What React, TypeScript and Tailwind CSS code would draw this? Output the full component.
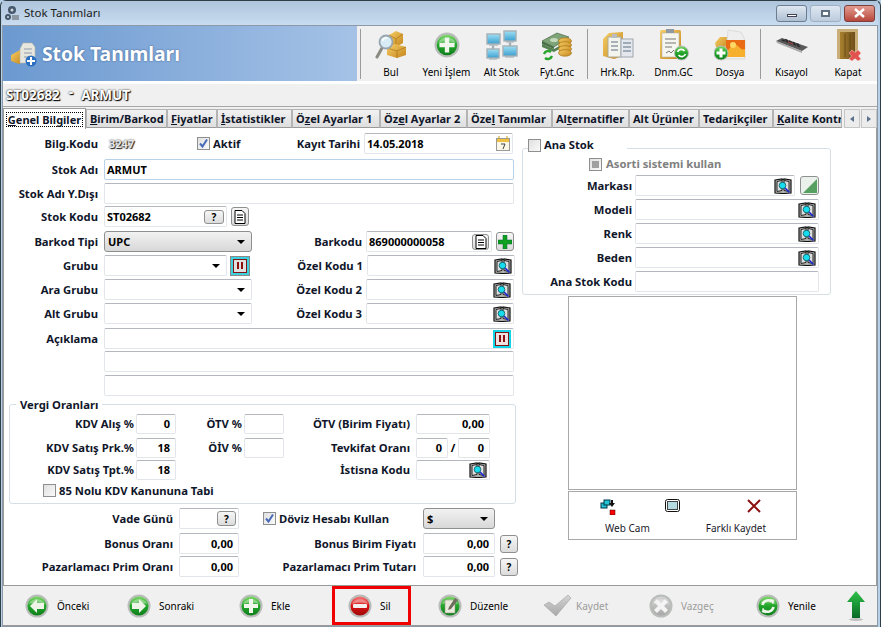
const font = "font-['Noto_Sans',sans-serif]";

function Defs() {
  return (
    <svg className="absolute h-0 w-0">
      <defs>
        <linearGradient id="green" x1="0" y1="0" x2="0" y2="1">
          <stop offset="0" stopColor="#7fd86a" />
          <stop offset="0.5" stopColor="#22a52a" />
          <stop offset="1" stopColor="#0e7d1c" />
        </linearGradient>
        <linearGradient id="red" x1="0" y1="0" x2="0" y2="1">
          <stop offset="0" stopColor="#f47a7a" />
          <stop offset="0.5" stopColor="#d81414" />
          <stop offset="1" stopColor="#a00808" />
        </linearGradient>
        <linearGradient id="grey" x1="0" y1="0" x2="0" y2="1">
          <stop offset="0" stopColor="#d4d4d4" />
          <stop offset="1" stopColor="#a8a8a8" />
        </linearGradient>
        <linearGradient id="gold" x1="0" y1="0" x2="1" y2="1">
          <stop offset="0" stopColor="#f6cf66" />
          <stop offset="1" stopColor="#c5851c" />
        </linearGradient>
        <linearGradient id="arrow" x1="0" y1="0" x2="0" y2="1">
          <stop offset="0" stopColor="#2fc24a" />
          <stop offset="1" stopColor="#066b25" />
        </linearGradient>
        <linearGradient id="door" x1="0" y1="0" x2="1" y2="0">
          <stop offset="0" stopColor="#a8802f" />
          <stop offset="1" stopColor="#6f4f1b" />
        </linearGradient>
        <linearGradient id="screen" x1="0" y1="0" x2="0" y2="1">
          <stop offset="0" stopColor="#9fe0f5" />
          <stop offset="1" stopColor="#3c9fd0" />
        </linearGradient>
      </defs>
    </svg>
  );
}

function Round({ tone, size = 24, children }: { tone: string; size?: number; children: React.ReactNode }) {
  return (
    <svg width={size} height={size} viewBox="0 0 24 24" className="shrink-0">
      <circle cx="12" cy="12" r="11.5" fill="#b9bdb9" />
      <circle cx="12" cy="12" r="9.5" fill={`url(#${tone})`} />
      <path d="M4 10a8.5 7 0 0 1 16 0a12 6 0 0 0-16 0z" fill="#fff" opacity=".35" />
      {children}
    </svg>
  );
}

const plus = <path d="M10 5h4v5h5v4h-5v5h-4v-5H5v-4h5z" fill="#f2f7ee" />;
const minus = <rect x="5" y="10" width="14" height="4" rx="1" fill="#f6f0f0" />;
const left = <path d="M5 12l7-7v4h7v6h-7v4z" fill="#eef5e8" />;
const right = <path d="M19 12l-7-7v4H5v6h7v4z" fill="#eef5e8" />;
const cross = <path d="M8 5l4 4 4-4 3 3-4 4 4 4-3 3-4-4-4 4-3-3 4-4-4-4z" fill="#f4f4f4" />;
const refresh = (
  <g fill="none" stroke="#f2f7ee" strokeWidth="2.6">
    <path d="M6.5 11a6 6 0 0 1 9.5-3.5" />
    <path d="M17.5 13a6 6 0 0 1-9.5 3.5" />
    <path d="M14 5l4 1-1 4z" fill="#f2f7ee" strokeWidth="0.5" />
    <path d="M10 19l-4-1 1-4z" fill="#f2f7ee" strokeWidth="0.5" />
  </g>
);
const edit = (
  <g>
    <path d="M7 6h8l2 2v11H7z" fill="#e9e9dc" stroke="#8a8a7a" strokeWidth=".5" />
    <path d="M17 4l3 2-7 9-3 1 1-3z" fill="#6e6e5e" />
  </g>
);

function BulIcon() {
  return (
    <svg width="32" height="32" viewBox="0 0 32 32">
      <path d="M14 6l7-4 7 3v9l-7 4-7-3z" fill="url(#gold)" />
      <path d="M14 6l7 4 7-5M21 10v8" stroke="#a87418" strokeWidth=".7" fill="none" />
      <path d="M12 19l8-4 11 3v8l-9 3-10-3z" fill="url(#gold)" />
      <path d="M12 19l10 3 9-4M22 22v7" stroke="#a87418" strokeWidth=".7" fill="none" />
      <path d="M7 19L2 28" stroke="#8a8a80" strokeWidth="3" strokeLinecap="round" />
      <circle cx="11" cy="13" r="6.5" fill="#d9ecf6" stroke="#98a4ae" strokeWidth="1.8" />
      <path d="M7.5 12a4 4 0 0 1 5-3" stroke="#fff" strokeWidth="1.4" fill="none" />
    </svg>
  );
}

function AltStokIcon() {
  const screens = [
    [1, 5, 13, 10],
    [18, 2, 12, 10],
    [1, 20, 12, 9],
    [17, 17, 14, 10],
  ];
  return (
    <svg width="32" height="32" viewBox="0 0 32 32">
      <path d="M7 15v5M24 12v5" stroke="#a5b0b6" strokeWidth="2.4" />
      <path d="M3 16h9M20 13h8M3 30h8M19 28h9" stroke="#b5bec4" strokeWidth="1.4" />
      {screens.map(([x, y, w, h], i) => (
        <rect key={i} x={x} y={y} width={w} height={h} fill="url(#screen)" stroke="#a5b0b6" strokeWidth="1.4" />
      ))}
    </svg>
  );
}

function FiyatIcon() {
  return (
    <svg width="32" height="32" viewBox="0 0 32 32">
      <path d="M1 12L16 4l12 4-15 10z" fill="#7ea378" stroke="#4b6f49" strokeWidth=".7" />
      <path d="M1 15l12 5 7-4v3l-7 4-12-5z" fill="#567f52" />
      <path d="M1 12l12 6v2L1 15z" fill="#486e45" />
      <ellipse cx="13" cy="11" rx="4" ry="2" fill="#c3d9ba" />
      {[12, 16, 20, 24].map((y) => (
        <ellipse key={y} cx="24" cy={y} rx="6.5" ry="3.2" fill="url(#gold)" stroke="#a87418" strokeWidth=".7" />
      ))}
      <path d="M3 25a4.5 4.5 0 0 1 7-2M11 27a4.5 4.5 0 0 1-7 2" stroke="#28a52c" strokeWidth="2.4" fill="none" />
    </svg>
  );
}

function HrkIcon() {
  return (
    <svg width="32" height="32" viewBox="0 0 32 32">
      <path d="M1 10l6-6 14-1v24l-9 3-11-3z" fill="url(#gold)" />
      <rect x="6" y="8" width="13" height="20" fill="#f4f4ee" stroke="#a9a99a" />
      <rect x="10" y="5" width="5" height="4" fill="#b9bdc0" />
      <rect x="19" y="10" width="12" height="18" fill="#e4e8ee" stroke="#a0a7b0" />
      <path d="M9 13h7M9 17h7M9 21h7M21 14h8M21 18h8M21 22h8" stroke="#5d6f82" strokeWidth="1.2" />
    </svg>
  );
}

function DonemIcon() {
  return (
    <svg width="32" height="32" viewBox="0 0 32 32">
      <rect x="2" y="1" width="21" height="29" rx="1.5" fill="url(#gold)" />
      <rect x="4" y="4" width="17" height="24" fill="#f6f6f0" stroke="#b4b4a8" strokeWidth=".6" />
      <rect x="8" y="0" width="8" height="4" fill="#8f9aa2" />
      <path d="M7 10h11M7 14h11M7 18h7M8 24l3-2 2 2 3-3" stroke="#777" strokeWidth="1" fill="none" />
      <circle cx="23.5" cy="24" r="7" fill="url(#green)" stroke="#b9bdb9" />
      <path d="M19.5 23a4 4 0 0 1 7-1M27.5 25a4 4 0 0 1-7 1" stroke="#fff" strokeWidth="1.6" fill="none" />
    </svg>
  );
}

function DosyaIcon() {
  return (
    <svg width="32" height="32" viewBox="0 0 32 32">
      <path d="M1 14l5-6h7l-2 14H3z" fill="url(#gold)" />
      <path d="M14 1l13 2 4 8v19H12z" fill="#eeeeee" stroke="#cfcfcf" strokeWidth=".6" />
      <rect x="12" y="11" width="19" height="17" fill="#e96c14" />
      <path d="M12 25c4-8 9-11 12-8s4 4 7 3v8H12z" fill="#f7b02d" />
      <circle cx="19" cy="16" r="3" fill="#ffd766" />
      <circle cx="7" cy="24" r="7" fill="url(#green)" stroke="#b9bdb9" />
      <path d="M5.5 19.5h3v3h3v3h-3v3h-3v-3h-3v-3h3z" fill="#fff" />
    </svg>
  );
}

function KisayolIcon() {
  return (
    <svg width="32" height="32" viewBox="0 0 32 32">
      <path d="M0 12l6-3 26 9-6 4z" fill="#5a5a5a" />
      <path d="M0 12l26 10v2L1 14z" fill="#a9a9a9" />
      <path d="M6 11l19 7M9 10.5l15 5.5" stroke="#2a2a2a" strokeWidth="1.4" strokeDasharray="3 1" />
      <path d="M12 13l5 2" stroke="#a04040" strokeWidth="1.2" />
    </svg>
  );
}

function KapatIcon() {
  return (
    <svg width="32" height="32" viewBox="0 0 32 32">
      <rect x="5" y="0" width="21" height="30" fill="#c9ae78" />
      <rect x="8" y="3" width="15" height="27" fill="url(#door)" />
      <path d="M13 5v23M18 5v23" stroke="#58400f" strokeWidth="1" opacity=".7" />
      <path d="M20 21l3 2.500 3-2.500 3 3-2.500 3 2.500 3-3 2-3-2.500-3 2.500-3-2 2.500-3-2.500-3z" fill="#e2534f" stroke="#f4c4c0" strokeWidth=".6" />
    </svg>
  );
}

function SmallBook() {
  return (
    <svg width="18" height="16" viewBox="0 0 18 16" className="shrink-0">
      <path d="M1 2l7-1 1 1 1-1 7 1v13l-8 .5L1 15z" fill="#b5b5b5" stroke="#111" strokeWidth="1.2" />
      <path d="M3 3.500l5-1v10l-5 1zM10 2.500l5 1v10l-5-1z" fill="#dedede" stroke="#222" strokeWidth="1" />
      <circle cx="8.500" cy="7.500" r="3.300" fill="#16dcee" stroke="#0b5a60" strokeWidth=".8" />
      <path d="M11 10l4.500 4.500" stroke="#1c2ad0" strokeWidth="1.7" />
    </svg>
  );
}

function DocIcon() {
  return (
    <svg width="12" height="14" viewBox="0 0 12 14">
      <path d="M1 .5h7l3 3v10H1z" fill="#fff" stroke="#000" />
      <path d="M3 5h6M3 7.500h6M3 10h6" stroke="#000" />
    </svg>
  );
}

function Label({ children, className = "" }: { children: React.ReactNode; className?: string }) {
  return <span className={`whitespace-nowrap text-right text-[11.25px] font-bold text-[#10162a] ${className}`}>{children}</span>;
}

function Input({
  className = "",
  value,
  right,
  children,
}: {
  className?: string;
  value?: string;
  right?: boolean;
  children?: React.ReactNode;
}) {
  return (
    <div
      className={`flex items-center gap-1 rounded-[2px] border border-[#e2e5ea] border-t-[#b4b7bd] bg-white pl-[2px] pr-[2px] font-bold text-black ${className}`}
    >
      <span className={`flex-1 whitespace-nowrap ${right ? "pr-[3px] text-right" : ""}`}>{value}</span>
      {children}
    </div>
  );
}

function SmallBtn({ children, className = "" }: { children: React.ReactNode; className?: string }) {
  return (
    <div
      className={`flex h-[18px] w-[18px] shrink-0 items-center justify-center rounded-[3px] border border-[#8e8f8f] bg-gradient-to-b from-[#f6f6f6] to-[#dcdcdc] font-bold text-black ${className}`}
    >
      {children}
    </div>
  );
}

function Select({ value, className = "" }: { value?: string; className?: string }) {
  return (
    <div
      className={`flex items-center justify-between rounded-[3px] border border-[#8e8f8f] bg-gradient-to-b from-[#f2f2f2] to-[#d8d8d8] pl-[3px] pr-[6px] font-bold text-black ${className}`}
    >
      <span>{value}</span>
      <span className="h-0 w-0 border-x-[4px] border-t-[4px] border-x-transparent border-t-black" />
    </div>
  );
}

function Combo({ className = "" }: { className?: string }) {
  return (
    <div className={`flex items-center justify-end rounded-[2px] border border-[#e2e5ea] border-t-[#b4b7bd] bg-white pr-[6px] ${className}`}>
      <span className="h-0 w-0 border-x-[4px] border-t-[4px] border-x-transparent border-t-black" />
    </div>
  );
}

function Check({ checked, disabled }: { checked?: boolean; disabled?: boolean }) {
  return (
    <span className="flex h-[13px] w-[13px] shrink-0 items-center justify-center border border-[#8e8f8f] bg-gradient-to-br from-[#e0e0e0] to-[#fafafa]">
      {checked && (
        <svg width="11" height="11" viewBox="0 0 11 11">
          <path d="M2 5.500l2.500 3L9 1.500" stroke="#4a6cb8" strokeWidth="2" fill="none" />
        </svg>
      )}
      {disabled && <span className="h-[7px] w-[7px] bg-[#a0a0a0]" />}
    </span>
  );
}

function PauseBtn({ cyan }: { cyan?: boolean }) {
  return (
    <div
      className={`flex h-[18px] w-[18px] shrink-0 items-center justify-center border-2 ${
        cyan ? "border-[#12d4e6] bg-[#f0e0e0]" : "border-[#3fd0e0] bg-[#e0e0e0] outline outline-1 outline-[#8a8a8a]"
      }`}
    >
      <span className="flex h-full w-full items-center justify-center gap-[2px] border border-[#7a1616]">
        <span className="h-[7px] w-[2px] bg-[#8a1010]" />
        <span className="h-[7px] w-[2px] bg-[#8a1010]" />
      </span>
    </div>
  );
}

const tabs: [string, string, string, number][] = [
  ["", "B", "irim/Barkod", 81],
  ["", "F", "iyatlar", 50],
  ["", "İ", "statistikler", 75],
  ["Ö", "z", "el Ayarlar 1", 88],
  ["Öz", "e", "l Ayarlar 2", 87],
  ["Öze", "l", " Tanımlar", 85],
  ["Al", "t", "ernatifler", 77],
  ["Alt Ü", "r", "ünler", 70],
  ["Tedar", "i", "kçiler", 74],
  ["", "K", "alite Kontr", 69],
];

const toolbarA = [
  { label: "Bul", icon: <BulIcon />, w: "w-[56px]" },
  {
    label: "Yeni İşlem",
    icon: <Round tone="green" size={26}>{plus}</Round>,
    w: "w-[55px]",
  },
  { label: "Alt Stok", icon: <AltStokIcon />, w: "w-[55px]" },
  { label: "Fyt.Gnc", icon: <FiyatIcon />, w: "w-[56px]" },
];
const toolbarB = [
  { label: "Hrk.Rp.", icon: <HrkIcon />, w: "w-[55px]" },
  { label: "Dnm.GC", icon: <DonemIcon />, w: "w-[57px]" },
  { label: "Dosya", icon: <DosyaIcon />, w: "w-[56px]" },
];
const toolbarC = [
  { label: "Kısayol", icon: <KisayolIcon />, w: "w-[57px]" },
  { label: "Kapat", icon: <KapatIcon />, w: "w-[56px]" },
];

function ToolBtn({ label, icon, w }: { label: string; icon: React.ReactNode; w: string }) {
  return (
    <div className={`flex flex-col items-center ${w}`}>
      <div className="flex h-[34px] items-center justify-center">{icon}</div>
      <span className="mt-[4px] whitespace-nowrap text-[10px] leading-[13px] text-black">{label}</span>
    </div>
  );
}

function ToolSep() {
  return <div className="mx-[2px] h-[50px] w-[1px] self-center border-l border-[#9b9b9b]" />;
}

function BottomBtn({
  label,
  icon,
  w,
  off,
  gap = "gap-[8px]",
  boxed,
}: {
  label: string;
  icon: React.ReactNode;
  w: string;
  off?: boolean;
  gap?: string;
  boxed?: boolean;
}) {
  return (
    <div className={`relative flex h-full items-center ${gap} ${w}`}>
      {icon}
      <span className={`text-[10px] ${off ? "text-[#9c9c9c]" : "text-black"}`}>{label}</span>
      {boxed && <div className="absolute -left-[16px] top-[0px] h-[39px] w-[79px] border-[3px] border-[#f00000]" />}
    </div>
  );
}

export default function App() {
  return (
    <div className={`h-[627px] w-[881px] overflow-hidden bg-[#b6d0e8] text-[11px] leading-[14px] ${font}`}>
      <Defs />
      <div className="flex h-full flex-col rounded-t-[6px] border border-[#2f3d47] border-b-0 pl-[1px] pr-[2px]">
        {/* title bar */}
        <div className="flex h-[24px] shrink-0 items-center bg-gradient-to-b from-[#aec5dc] to-[#c9dcf0] pl-[2px] pr-[3px]">
          <svg width="16" height="16" viewBox="0 0 16 16">
            <circle cx="8" cy="5" r="4" fill="#46586b" />
            <circle cx="8" cy="5" r="1.500" fill="#cfd8e0" />
            <circle cx="4" cy="12" r="3" fill="#46586b" />
            <circle cx="4" cy="12" r="1" fill="#cfd8e0" />
            <rect x="8" y="10" width="7" height="5" fill="#8d98a3" />
          </svg>
          <span className="ml-[4px] text-[11.5px] text-[#1a1a1a]">Stok Tanımları</span>
          <div className="ml-auto flex gap-[3px]">
            <div className="flex h-[17px] w-[31px] items-center justify-center rounded-[3px] border border-[#6b7d91] bg-gradient-to-b from-[#dfe8f2] to-[#aebfd2]">
              <span className="mt-[4px] h-[3px] w-[10px] border border-[#445] bg-white" />
            </div>
            <div className="flex h-[17px] w-[31px] items-center justify-center rounded-[3px] border border-[#9fb0c2] bg-gradient-to-b from-[#dfe8f2] to-[#bccbdc]">
              <span className="h-[7px] w-[9px] border-2 border-[#607080] bg-white" />
            </div>
            <div className="flex h-[17px] w-[31px] items-center justify-center rounded-[3px] border border-[#7c3f3a] bg-gradient-to-b from-[#e39c91] to-[#b6463c]">
              <svg width="13" height="10" viewBox="0 0 13 10">
                <path d="M2 1l9 8M11 1L2 9" stroke="#fff" strokeWidth="2.400" />
              </svg>
            </div>
          </div>
        </div>

        <div className="flex min-h-0 flex-1 flex-col border border-[#8d99a6] bg-white">
          {/* header */}
          <div className="flex h-[55px] shrink-0">
            <div className="flex w-[354px] items-center bg-gradient-to-r from-[#6b99d0] to-[#a5c2e6] pl-[8px]">
              <svg width="26" height="26" viewBox="0 0 26 26">
                <path d="M0 14l9-5 3 2v10l-4 2-8-3z" fill="url(#gold)" />
                <path d="M9 8l3-6h9l3 4v16H9z" fill="#e7e7e0" stroke="#b5b5a5" strokeWidth=".6" />
                <path d="M13 8h8M13 12h8M13 16h5" stroke="#8f9aa5" />
                <circle cx="20" cy="20" r="5.500" fill="#2b6fc0" />
                <path d="M19 16h2v3h3v2h-3v3h-2v-3h-3v-2h3z" fill="#fff" />
              </svg>
              <span className="ml-[5px] text-[19.3px] font-bold text-white [text-shadow:0_0_2px_#35598a]">Stok Tanımları</span>
            </div>
            <div className="flex flex-1 items-center bg-[#f0f0f0] pl-[1px]">
              <ToolSep />
              {toolbarA.map((b) => (
                <ToolBtn key={b.label} {...b} />
              ))}
              <ToolSep />
              {toolbarB.map((b) => (
                <ToolBtn key={b.label} {...b} />
              ))}
              <ToolSep />
              {toolbarC.map((b) => (
                <ToolBtn key={b.label} {...b} />
              ))}
            </div>
          </div>

          {/* record strip */}
          <div className="mt-[3px] flex h-[23px] shrink-0 items-center border-b border-[#a8a8a8] bg-[#f0f0f0] pl-[3px] text-[13.5px] font-bold text-white [text-shadow:0_0_2px_#000,1px_1px_1px_#000]">
            <span>ST02682</span>
            <span className="-mt-[6px] ml-[9px]">-</span>
            <span className="ml-[8px]">ARMUT</span>
          </div>

          {/* tabs */}
          <div className="flex h-[21px] shrink-0 items-end bg-[#f0f0f0]">
            <div className="z-10 mb-[-1px] flex h-[21px] w-[83px] items-center justify-center border border-b-0 border-[#9a9a9a] bg-white font-bold text-[#10162a]">
              <span className="border border-dotted border-black px-[1px] leading-[13px]">
                <span className="underline">G</span>enel Bilgiler
              </span>
            </div>
            {tabs.map(([a, u, b, w]) => (
              <div
                key={a + u + b}
                style={{ width: w }}
                className="flex h-[19px] items-center overflow-hidden border border-[#b4b4b4] border-b-[#9a9a9a] bg-gradient-to-b from-[#f2f2f2] to-[#dedede] pl-[3px] font-bold text-[#10162a]"
              >
                <span className="whitespace-pre">
                  {a}
                  <span className="underline">{u}</span>
                  {b}
                </span>
              </div>
            ))}
            <div className="ml-auto flex h-[19px] gap-[1px]">
              <div className="flex w-[16px] items-center justify-center border border-[#c6c6c6] bg-[#ececec]">
                <span className="h-0 w-0 border-y-[3px] border-r-[4px] border-y-transparent border-r-[#5a6f8a]" />
              </div>
              <div className="flex w-[16px] items-center justify-center border border-[#c6c6c6] bg-[#ececec]">
                <span className="h-0 w-0 border-y-[3px] border-l-[4px] border-y-transparent border-l-[#5a6f8a]" />
              </div>
            </div>
          </div>

          {/* page */}
          <div className="flex min-h-0 flex-1 border-x border-b border-[#9a9a9a] bg-white pt-[5px]">
            {/* left column */}
            <div className="flex w-[516px] shrink-0 flex-col">
              <div className="flex h-[21px] items-center">
                <Label className="w-[94px]">Bilg.Kodu</Label>
                <span className="ml-[11px] w-[88px] font-bold text-[#e8e8e8] [text-shadow:0_0_2px_#222,1px_1px_1px_#222]">3247</span>
                <Check checked />
                <Label className="ml-[3px] w-[27px] text-left">Aktif</Label>
                <Label className="w-[120px]">Kayıt Tarihi</Label>
                <Input className="ml-[4px] h-[21px] w-[149px]" value="14.05.2018">
                  <svg width="14" height="15" viewBox="0 0 14 15" className="shrink-0">
                    <rect x=".5" y="2.500" width="13" height="12" fill="#fbf7e8" stroke="#999" />
                    <rect x="1" y="3" width="12" height="3" fill="#f0c040" />
                    <path d="M3 0v3M11 0v3" stroke="#c79a20" />
                    <path d="M5 8h4l-2 5" stroke="#444" fill="none" />
                  </svg>
                </Input>
              </div>
              <div className="mt-[5px] flex h-[21px] items-center">
                <Label className="w-[94px]">Stok Adı</Label>
                <Input className="ml-[6px] h-[21px] w-[410px] !border-[#b7d2ea]" value="ARMUT" />
              </div>
              <div className="mt-[3px] flex h-[21px] items-center">
                <Label className="w-[94px]">Stok Adı Y.Dışı</Label>
                <Input className="ml-[6px] h-[21px] w-[410px]" />
              </div>
              <div className="mt-[2px] flex h-[21px] items-center">
                <Label className="w-[94px]">Stok Kodu</Label>
                <Input className="ml-[6px] h-[21px] w-[123px]" value="ST02682">
                  <SmallBtn className="!h-[14px] !w-[20px] text-[10px]">?</SmallBtn>
                </Input>
                <SmallBtn className="ml-[4px] !h-[19px] !w-[18px]">
                  <DocIcon />
                </SmallBtn>
              </div>
              <div className="mt-[4px] flex h-[21px] items-center">
                <Label className="w-[94px]">Barkod Tipi</Label>
                <Select className="ml-[6px] h-[21px] w-[148px]" value="UPC" />
                <Label className="w-[110px]">Barkodu</Label>
                <Input className="ml-[4px] h-[21px] w-[126px]" value="869000000058">
                  <SmallBtn className="!h-[16px] !w-[17px]">
                    <DocIcon />
                  </SmallBtn>
                </Input>
                <SmallBtn className="ml-[4px] !h-[19px]">
                  <svg width="14" height="14" viewBox="0 0 14 14">
                    <path d="M5 0h4v5h5v4H9v5H5V9H0V5h5z" fill="#10a020" stroke="#063" strokeWidth=".5" />
                  </svg>
                </SmallBtn>
              </div>
              {["Grubu", "Ara Grubu", "Alt Grubu"].map((name, i) => (
                <div key={name} className="mt-[3px] flex h-[21px] items-center">
                  <Label className="w-[94px]">{name}</Label>
                  {i === 0 ? (
                    <>
                      <Combo className="ml-[6px] h-[21px] w-[123px]" />
                      <div className="ml-[4px]">
                        <PauseBtn />
                      </div>
                      <Label className="w-[114px]">Özel Kodu {i + 1}</Label>
                    </>
                  ) : (
                    <>
                      <Combo className="ml-[6px] h-[21px] w-[148px]" />
                      <Label className="w-[110px]">Özel Kodu {i + 1}</Label>
                    </>
                  )}
                  <Input className="ml-[4px] h-[21px] w-[148px]">
                    <SmallBook />
                  </Input>
                </div>
              ))}
              <div className="mt-[4px] flex h-[21px] items-center">
                <Label className="w-[94px]">Açıklama</Label>
                <Input className="ml-[6px] h-[21px] w-[410px]">
                  <PauseBtn cyan />
                </Input>
              </div>
              <Input className="ml-[100px] mt-[2px] h-[21px] w-[410px]" />
              <Input className="ml-[100px] mt-[3px] h-[21px] w-[410px]" />

              {/* Vergi */}
              <div className="relative ml-[5px] mt-[8px] h-[100px] w-[507px] rounded-[3px] border border-[#d5dfe5] pt-[8px]">
                <span className="absolute -top-[7px] left-[6px] bg-white px-[4px] text-[11.25px] font-bold text-[#10162a]">Vergi Oranları</span>
                <div className="flex h-[21px] items-center">
                  <Label className="w-[124px]">KDV Alış %</Label>
                  <Input className="ml-[2px] h-[20px] w-[40px]" value="0" right />
                  <Label className="w-[66px]">ÖTV %</Label>
                  <Input className="ml-[2px] h-[20px] w-[40px]" />
                  <Label className="w-[126px]">ÖTV (Birim Fiyatı)</Label>
                  <Input className="ml-[6px] h-[20px] w-[74px]" value="0,00" right />
                </div>
                <div className="mt-[3px] flex h-[21px] items-center">
                  <Label className="w-[124px]">KDV Satış Prk.%</Label>
                  <Input className="ml-[2px] h-[20px] w-[40px]" value="18" right />
                  <Label className="w-[66px]">ÖİV %</Label>
                  <Input className="ml-[2px] h-[20px] w-[40px]" />
                  <Label className="w-[126px]">Tevkifat Oranı</Label>
                  <Input className="ml-[6px] h-[20px] w-[32px]" value="0" right />
                  <span className="w-[10px] text-center font-bold">/</span>
                  <Input className="h-[20px] w-[32px]" value="0" right />
                </div>
                <div className="mt-[1px] flex h-[21px] items-center">
                  <Label className="w-[124px]">KDV Satış Tpt.%</Label>
                  <Input className="ml-[2px] h-[20px] w-[40px]" value="18" right />
                  <Label className="w-[234px]">İstisna Kodu</Label>
                  <Input className="ml-[6px] h-[20px] w-[74px]">
                    <SmallBook />
                  </Input>
                </div>
                <div className="ml-[33px] mt-[2px] flex h-[17px] items-center gap-[3px]">
                  <Check />
                  <Label>85 Nolu KDV Kanununa Tabi</Label>
                </div>
              </div>

              <div className="mt-[4px] flex h-[21px] items-center">
                <Label className="w-[169px]">Vade Günü</Label>
                <Input className="ml-[6px] h-[21px] w-[60px]">
                  <SmallBtn className="!h-[15px] !w-[19px] text-[10px]">?</SmallBtn>
                </Input>
                <div className="ml-[24px] flex w-[154px] items-center gap-[3px]">
                  <Check checked />
                  <Label>Döviz Hesabı Kullan</Label>
                </div>
                <Select className="ml-[6px] h-[21px] w-[72px]" value="$" />
              </div>
              <div className="mt-[4px] flex h-[21px] items-center">
                <Label className="w-[169px]">Bonus Oranı</Label>
                <Input className="ml-[6px] h-[21px] w-[60px]" value="0,00" right />
                <Label className="w-[177px]">Bonus Birim Fiyatı</Label>
                <Input className="ml-[7px] h-[21px] w-[72px]" value="0,00" right />
                <SmallBtn className="ml-[5px] text-[10px]">?</SmallBtn>
              </div>
              <div className="mt-[2px] flex h-[21px] items-center">
                <Label className="w-[169px]">Pazarlamacı Prim Oranı</Label>
                <Input className="ml-[6px] h-[21px] w-[60px]" value="0,00" right />
                <Label className="w-[177px]">Pazarlamacı Prim Tutarı</Label>
                <Input className="ml-[7px] h-[21px] w-[72px]" value="0,00" right />
                <SmallBtn className="ml-[5px] text-[10px]">?</SmallBtn>
              </div>
            </div>

            {/* right column */}
            <div className="-mt-[5px] ml-[2px] flex flex-1 flex-col pt-[1px]">
              <div className="relative mt-[19px] h-[147px] w-[309px] rounded-[3px] border border-[#d5dfe5] pr-[10px]">
                <div className="absolute -top-[11px] left-[5px] flex items-center gap-[3px] bg-white pr-[33px]">
                  <Check />
                  <Label>Ana Stok</Label>
                </div>
                <div className="ml-[66px] mt-[8px] flex h-[14px] items-center gap-[4px]">
                  <Check disabled />
                  <span className="text-[11.25px] font-bold text-[#808080]">Asorti sistemi kullan</span>
                </div>
                <div className="mt-[4px] flex h-[21px] items-center">
                  <Label className="w-[109px]">Markası</Label>
                  <Input className="ml-[3px] h-[21px] w-[160px]">
                    <SmallBook />
                  </Input>
                  <SmallBtn className="ml-[5px] !h-[19px] !w-[19px] !bg-none !bg-[#eaf0ea]">
                    <svg width="14" height="14" viewBox="0 0 14 14">
                      <path d="M14 0v14H0z" fill="#56a060" />
                    </svg>
                  </SmallBtn>
                </div>
                {["Modeli", "Renk", "Beden"].map((name) => (
                  <div key={name} className="mt-[3px] flex h-[21px] items-center">
                    <Label className="w-[109px]">{name}</Label>
                    <Input className="ml-[3px] h-[21px] w-[184px]">
                      <SmallBook />
                    </Input>
                  </div>
                ))}
                <div className="mt-[3px] flex h-[21px] items-center">
                  <Label className="w-[109px]">Ana Stok Kodu</Label>
                  <Input className="ml-[3px] h-[21px] w-[184px]" />
                </div>
              </div>
              <div className="ml-[46px] mt-[1px] h-[194px] w-[229px] border border-[#a8a8a8]" />
              <div className="ml-[46px] mt-[1px] h-[49px] w-[229px] border border-[#a8a8a8]">
                <div className="mt-[7px] flex justify-between px-[31px] pr-[30px]">
                  <svg width="16" height="16" viewBox="0 0 16 16">
                    <rect x="1" y="4" width="6" height="5" fill="#23c4d4" stroke="#034" />
                    <rect x="4" y="1" width="6" height="5" fill="#23c4d4" stroke="#034" />
                    <path d="M11 1h2v3h2l-3 4-3-4h2z" fill="#111" />
                    <rect x="10" y="11" width="5" height="5" fill="#f00" stroke="#300" strokeWidth=".5" />
                  </svg>
                  <svg width="15" height="13" viewBox="0 0 15 13" className="mr-[18px]">
                    <rect x=".5" y=".5" width="14" height="12" rx="2" fill="#fff" stroke="#111" />
                    <rect x="2.500" y="2.500" width="10" height="8" fill="#b5dbe2" stroke="#444" />
                  </svg>
                  <svg width="14" height="14" viewBox="0 0 14 14" className="mr-[5px]">
                    <path d="M1 1l12 12M13 1L1 13" stroke="#8c1010" strokeWidth="2" />
                  </svg>
                </div>
                <div className="mt-[6px] flex text-[10px] text-[#1a1a2a]">
                  <span className="ml-[36px]">Web Cam</span>
                  <span className="ml-[56px]">Farklı Kaydet</span>
                </div>
              </div>
            </div>
          </div>

          {/* bottom bar */}
          <div className="flex h-[40px] shrink-0 items-center border-b border-[#9a9a9a] bg-[#f0f0f0] pl-[22px]">
            <BottomBtn label="Önceki" w="w-[102px]" icon={<Round tone="green">{left}</Round>} />
            <BottomBtn label="Sonraki" w="w-[112px]" icon={<Round tone="green">{right}</Round>} />
            <BottomBtn label="Ekle" w="w-[109px]" icon={<Round tone="green">{plus}</Round>} />
            <BottomBtn label="Sil" w="w-[90px]" boxed icon={<Round tone="red">{minus}</Round>} />
            <BottomBtn label="Düzenle" w="w-[105px]" icon={<Round tone="green">{edit}</Round>} />
            <BottomBtn
              label="Kaydet"
              w="w-[106px]"
              off
              gap="gap-[4px]"
              icon={
                <svg width="29" height="24" viewBox="0 0 29 24">
                  <path d="M1 11l5-3 6 4L25 1l3 3-15 18z" fill="url(#grey)" stroke="#a0a0a0" strokeWidth=".6" />
                </svg>
              }
            />
            <BottomBtn label="Vazgeç" w="w-[107px]" off icon={<Round tone="grey">{cross}</Round>} />
            <BottomBtn label="Yenile" w="w-[91px]" icon={<Round tone="green">{refresh}</Round>} />
            <svg width="18" height="30" viewBox="0 0 18 30">
              <path d="M9 0l9 11h-5v16H5V11H0z" fill="url(#arrow)" />
              <ellipse cx="9" cy="28.500" rx="7" ry="1.500" fill="#c0c0c0" />
            </svg>
          </div>
        </div>
      </div>
    </div>
  );
}
